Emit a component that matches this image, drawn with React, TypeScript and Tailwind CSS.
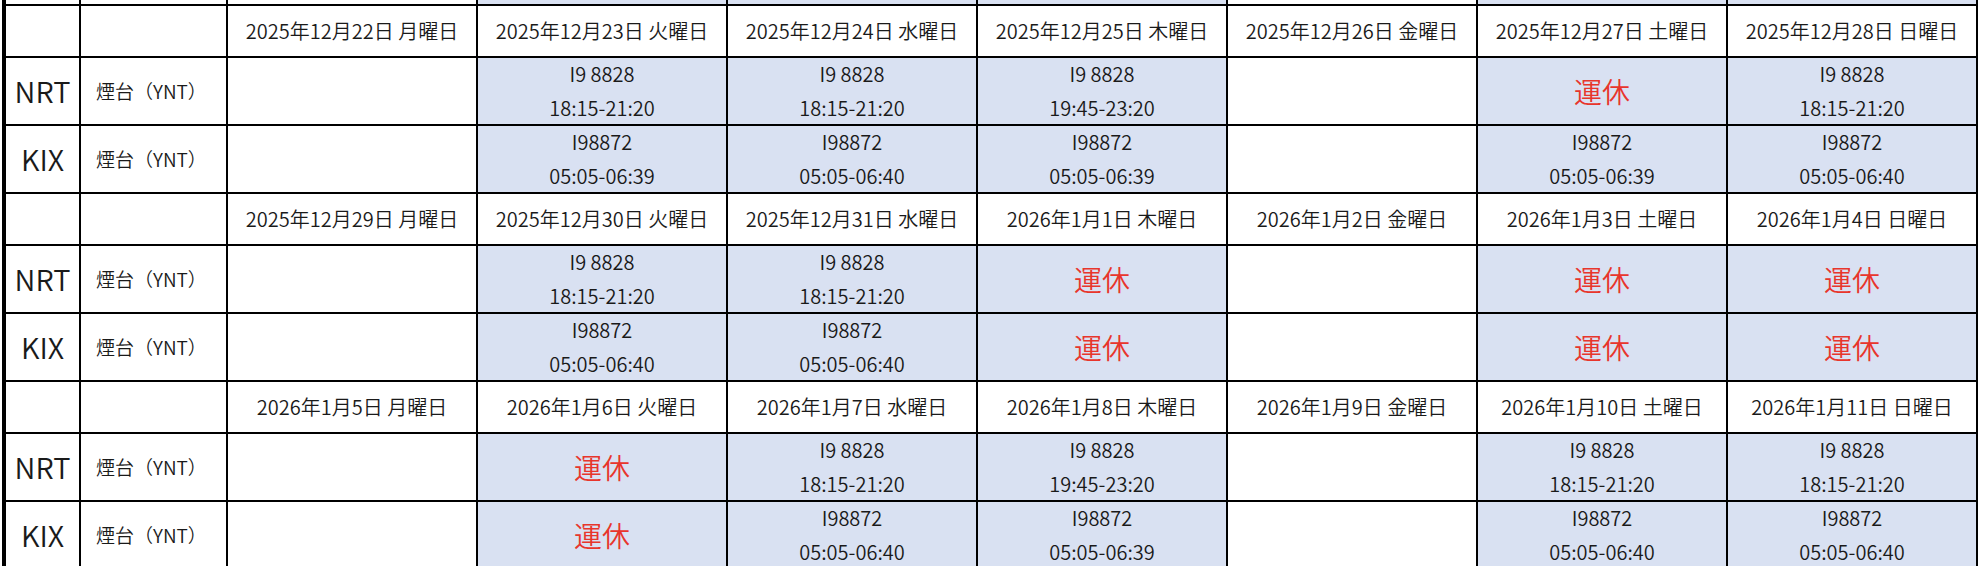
type Cell =
  | { kind: "empty" }
  | { kind: "flight"; code: string; time: string }
  | { kind: "off" };

type Day = { label: string; nrt: Cell; kix: Cell };

const E: Cell = { kind: "empty" };
const OFF: Cell = { kind: "off" };
const nrt = (time: string): Cell => ({ kind: "flight", code: "I9 8828", time });
const kix = (time: string): Cell => ({ kind: "flight", code: "I98872", time });

const weeks: Day[][] = [
  [
    { label: "2025年12月22日 月曜日", nrt: E, kix: E },
    { label: "2025年12月23日 火曜日", nrt: nrt("18:15-21:20"), kix: kix("05:05-06:39") },
    { label: "2025年12月24日 水曜日", nrt: nrt("18:15-21:20"), kix: kix("05:05-06:40") },
    { label: "2025年12月25日 木曜日", nrt: nrt("19:45-23:20"), kix: kix("05:05-06:39") },
    { label: "2025年12月26日 金曜日", nrt: E, kix: E },
    { label: "2025年12月27日 土曜日", nrt: OFF, kix: kix("05:05-06:39") },
    { label: "2025年12月28日 日曜日", nrt: nrt("18:15-21:20"), kix: kix("05:05-06:40") },
  ],
  [
    { label: "2025年12月29日 月曜日", nrt: E, kix: E },
    { label: "2025年12月30日 火曜日", nrt: nrt("18:15-21:20"), kix: kix("05:05-06:40") },
    { label: "2025年12月31日 水曜日", nrt: nrt("18:15-21:20"), kix: kix("05:05-06:40") },
    { label: "2026年1月1日 木曜日", nrt: OFF, kix: OFF },
    { label: "2026年1月2日 金曜日", nrt: E, kix: E },
    { label: "2026年1月3日 土曜日", nrt: OFF, kix: OFF },
    { label: "2026年1月4日 日曜日", nrt: OFF, kix: OFF },
  ],
  [
    { label: "2026年1月5日 月曜日", nrt: E, kix: E },
    { label: "2026年1月6日 火曜日", nrt: OFF, kix: OFF },
    { label: "2026年1月7日 水曜日", nrt: nrt("18:15-21:20"), kix: kix("05:05-06:40") },
    { label: "2026年1月8日 木曜日", nrt: nrt("19:45-23:20"), kix: kix("05:05-06:39") },
    { label: "2026年1月9日 金曜日", nrt: E, kix: E },
    { label: "2026年1月10日 土曜日", nrt: nrt("18:15-21:20"), kix: kix("05:05-06:40") },
    { label: "2026年1月11日 日曜日", nrt: nrt("18:15-21:20"), kix: kix("05:05-06:40") },
  ],
];

// previous week's last row peeks in at the top (Mon + Fri are blank)
const topSlice = [false, true, true, true, false, true, true];

function DataCell({ cell }: { cell: Cell }) {
  if (cell.kind === "empty") return <div className="bg-white" />;
  if (cell.kind === "off") {
    return (
      <div className="bg-[#d9e1f2] flex items-center justify-center text-[28px] text-[#e8352c]">
        運休
      </div>
    );
  }
  return (
    <div className="bg-[#d9e1f2] flex flex-col items-center justify-center leading-[34px] overflow-hidden">
      <span>{cell.code}</span>
      <span>{cell.time}</span>
    </div>
  );
}

function Week({ days }: { days: Day[] }) {
  return (
    <>
      <div className="bg-white" />
      <div className="bg-white" />
      {days.map((d) => (
        <div key={d.label} className="bg-white flex items-center justify-center">
          {d.label}
        </div>
      ))}

      <div className="bg-white flex items-center justify-center text-[29px]">NRT</div>
      <div className="bg-white flex items-center pl-[15px] text-[19px]">煙台（YNT）</div>
      {days.map((d) => (
        <DataCell key={d.label + "n"} cell={d.nrt} />
      ))}

      <div className="bg-white flex items-center justify-center text-[29px]">KIX</div>
      <div className="bg-white flex items-center pl-[15px] text-[19px]">煙台（YNT）</div>
      {days.map((d) => (
        <DataCell key={d.label + "k"} cell={d.kix} />
      ))}
    </>
  );
}

export default function App() {
  return (
    <div className="w-[1980px] h-[566px] overflow-hidden bg-white font-['Noto_Sans_CJK_JP','Noto_Sans',sans-serif] font-[350] text-[20px] text-[#1a1a1a]">
      <div className="ml-[2px] w-fit bg-black pl-[4px] pr-[2px] grid grid-cols-[73px_145px_repeat(7,248px)] grid-rows-[4px_50px_66px_66px_50px_66px_66px_50px_66px_66px] gap-[2px]">
        <div className="bg-white" />
        <div className="bg-white" />
        {topSlice.map((shaded, i) => (
          <div key={i} className={shaded ? "bg-[#d9e1f2]" : "bg-white"} />
        ))}
        {weeks.map((w, i) => (
          <Week key={i} days={w} />
        ))}
      </div>
    </div>
  );
}
